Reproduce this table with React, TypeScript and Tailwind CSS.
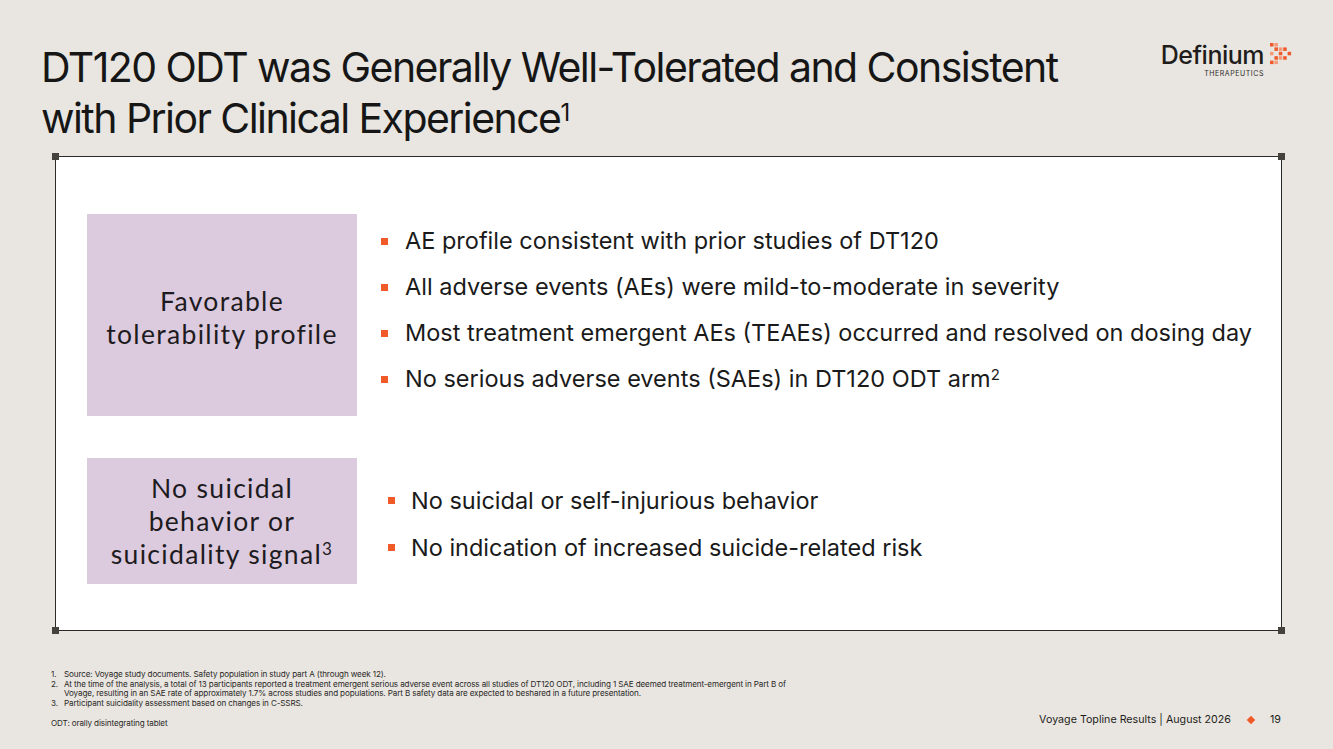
const sans = "font-['Inter','Liberation_Sans',sans-serif]";

function Logo() {
  // arrow made of small squares, two tones
  const cells = [
    "AB...",
    ".ABA.",
    "B.A.A",
    ".ABA.",
    "AB...",
  ];
  return (
    <div className="flex items-start gap-[6px]">
      <div className="flex flex-col items-end">
        <span className={`${sans} text-[25px] leading-[26px] font-medium tracking-[-0.02em] text-[#1f1d1b]`}>
          Definium
        </span>
        <span className={`${sans} text-[7px] leading-[8px] tracking-[0.08em] text-[#2a2725] mt-[2px]`}>
          THERAPEUTICS
        </span>
      </div>
      <svg width="22" height="22" viewBox="0 0 20 20" className="mt-[1px]">
        {cells.map((row, r) =>
          row.split("").map((c, i) =>
            c === "." ? null : (
              <rect
                key={`${r}-${i}`}
                x={i * 4}
                y={r * 4}
                width="3.2"
                height="3.2"
                fill={c === "A" ? "#ee5a2a" : "#f49a78"}
              />
            )
          )
        )}
      </svg>
    </div>
  );
}

function Bullet({ children, gap }: { children: React.ReactNode; gap: string }) {
  return (
    <li className={`flex items-center ${gap}`}>
      <span className="w-[7px] h-[7px] bg-[#f05a28] shrink-0" />
      <span>{children}</span>
    </li>
  );
}

function Handle({ pos }: { pos: string }) {
  return <span className={`absolute w-[7px] h-[7px] bg-[#45423e] ${pos}`} />;
}

const label = "bg-[#dccadf] flex items-center justify-center text-center font-['Lato','Noto_Sans',sans-serif] text-[26.5px] leading-[33px] tracking-[0.05em] text-[#1d1b1d]";

export default function App() {
  return (
    <div className={`w-[1333px] h-[749px] bg-[#e9e6e1] flex flex-col text-[#1a1a1a] ${sans}`}>
      <header className="flex justify-between pl-[41px] pr-[41px] pt-[42px]">
        <h1 className="text-[41px] leading-[51px] tracking-[-0.038em] text-[#161616]">
          DT120 ODT was Generally Well-Tolerated and Consistent
          <br />
          with Prior Clinical Experience<sup className="text-[24px]">1</sup>
        </h1>
        <div>
          <Logo />
        </div>
      </header>

      <section className="relative ml-[55px] mt-[12px] w-[1227px] h-[475px] bg-white border border-[#2c2a28] pl-[31px] pt-[57px] flex flex-col gap-[42px]">
        <Handle pos="-top-[4px] -left-[4px]" />
        <Handle pos="-top-[4px] -right-[4px]" />
        <Handle pos="-bottom-[4px] -left-[4px]" />
        <Handle pos="-bottom-[4px] -right-[4px]" />

        <div className="flex items-center">
          <div className={`w-[270px] h-[202px] pt-[6px] ${label}`}>
            <span>
              Favorable
              <br />
              tolerability profile
            </span>
          </div>
          <ul className="ml-[24px] mb-[10px] flex flex-col gap-[18px] text-[23.5px] leading-[28px]">
            <Bullet gap="gap-[17px]">AE profile consistent with prior studies of DT120</Bullet>
            <Bullet gap="gap-[17px]">All adverse events (AEs) were mild-to-moderate in severity</Bullet>
            <Bullet gap="gap-[17px]">Most treatment emergent AEs (TEAEs) occurred and resolved on dosing day</Bullet>
            <Bullet gap="gap-[17px]">
              No serious adverse events (SAEs) in DT120 ODT arm<sup className="text-[15px]">2</sup>
            </Bullet>
          </ul>
        </div>

        <div className="flex items-center">
          <div className={`w-[270px] h-[126px] ${label}`}>
            <span>
              No suicidal
              <br />
              behavior or
              <br />
              suicidality signal<sup className="text-[17px]">3</sup>
            </span>
          </div>
          <ul className="ml-[31px] flex flex-col gap-[19px] text-[23.5px] leading-[28px] pt-[6px]">
            <Bullet gap="gap-[16px]">No suicidal or self-injurious behavior</Bullet>
            <Bullet gap="gap-[16px]">No indication of increased suicide-related risk</Bullet>
          </ul>
        </div>
      </section>

      <footer className="flex justify-between items-end pl-[51px] pr-[52px] mt-[39px]">
        <div className="text-[8.1px] leading-[9.6px] tracking-[-0.015em] text-[#2a2826]">
          <ol className="flex flex-col">
            <li className="flex"><span className="w-[13px] shrink-0">1.</span>Source: Voyage study documents. Safety population in study part A (through week 12).</li>
            <li className="flex">
              <span className="w-[13px] shrink-0">2.</span>
              <span>
                At the time of the analysis, a total of 13 participants reported a treatment emergent serious adverse event across all studies of DT120 ODT, including 1 SAE deemed treatment-emergent in Part B of
                <br />
                Voyage, resulting in an SAE rate of approximately 1.7% across studies and populations. Part B safety data are expected to beshared in a future presentation.
              </span>
            </li>
            <li className="flex"><span className="w-[13px] shrink-0">3.</span>Participant suicidality assessment based on changes in C-SSRS.</li>
          </ol>
          <p className="mt-[11px]">ODT: orally disintegrating tablet</p>
        </div>
        <div className="flex items-center text-[10.7px] leading-[14px] text-[#1f1d1b] mb-[2px]">
          <span>Voyage Topline Results | August 2026</span>
          <span className="ml-[17px] w-[6px] h-[6px] bg-[#f05a28] rotate-45" />
          <span className="ml-[16px]">19</span>
        </div>
      </footer>
    </div>
  );
}
